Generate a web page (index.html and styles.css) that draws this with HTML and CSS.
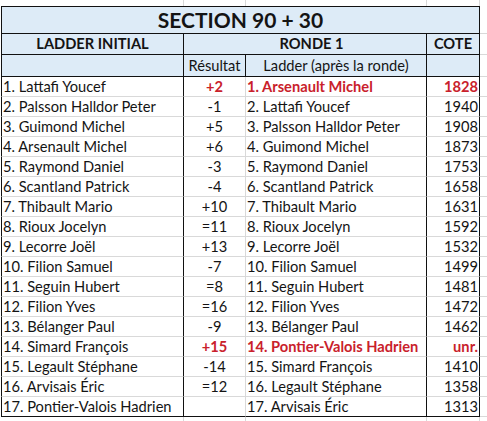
FILE: index.html
```html
<!DOCTYPE html>
<html lang="fr">
<head>
<meta charset="utf-8">
<title>Section 90 + 30</title>
<link rel="stylesheet" href="styles.css">
</head>
<body>
<table class="sheet">
  <colgroup>
    <col class="c-a"><col class="c-b"><col class="c-c"><col class="c-d"><col class="c-e">
  </colgroup>
  <tr class="pad-top"><td></td><td></td><td></td><td></td><td class="e"></td></tr>
  <tr class="title-row">
    <td colspan="4" class="title first">SECTION 90 + 30</td><td class="e"></td>
  </tr>
  <tr class="head-row">
    <td class="first hd">LADDER INITIAL</td>
    <td colspan="2" class="hd ronde">RONDE 1</td>
    <td class="hd">COTE</td>
    <td class="e"></td>
  </tr>
  <tr class="sub-row">
    <td class="first sub"></td>
    <td class="sub ctr">Résultat</td>
    <td class="sub ctr">Ladder (après la ronde)</td>
    <td class="sub"></td>
    <td class="e"></td>
  </tr>
  <tr><td class="first name">1. Lattafi Youcef</td><td class="res red">+2</td><td class="name2 red">1. Arsenault Michel</td><td class="cote red">1828</td><td class="e"></td></tr>
  <tr><td class="first name">2. Palsson Halldor Peter</td><td class="res">-1</td><td class="name2">2. Lattafi Youcef</td><td class="cote">1940</td><td class="e"></td></tr>
  <tr><td class="first name">3. Guimond Michel</td><td class="res">+5</td><td class="name2">3. Palsson Halldor Peter</td><td class="cote">1908</td><td class="e"></td></tr>
  <tr><td class="first name">4. Arsenault Michel</td><td class="res">+6</td><td class="name2">4. Guimond Michel</td><td class="cote">1873</td><td class="e"></td></tr>
  <tr><td class="first name">5. Raymond Daniel</td><td class="res">-3</td><td class="name2">5. Raymond Daniel</td><td class="cote">1753</td><td class="e"></td></tr>
  <tr><td class="first name">6. Scantland Patrick</td><td class="res">-4</td><td class="name2">6. Scantland Patrick</td><td class="cote">1658</td><td class="e"></td></tr>
  <tr><td class="first name">7. Thibault Mario</td><td class="res">+10</td><td class="name2">7. Thibault Mario</td><td class="cote">1631</td><td class="e"></td></tr>
  <tr><td class="first name">8. Rioux Jocelyn</td><td class="res">=11</td><td class="name2">8. Rioux Jocelyn</td><td class="cote">1592</td><td class="e"></td></tr>
  <tr><td class="first name">9. Lecorre Joël</td><td class="res">+13</td><td class="name2">9. Lecorre Joël</td><td class="cote">1532</td><td class="e"></td></tr>
  <tr><td class="first name">10. Filion Samuel</td><td class="res">-7</td><td class="name2">10. Filion Samuel</td><td class="cote">1499</td><td class="e"></td></tr>
  <tr><td class="first name">11. Seguin Hubert</td><td class="res">=8</td><td class="name2">11. Seguin Hubert</td><td class="cote">1481</td><td class="e"></td></tr>
  <tr><td class="first name">12. Filion Yves</td><td class="res">=16</td><td class="name2">12. Filion Yves</td><td class="cote">1472</td><td class="e"></td></tr>
  <tr><td class="first name">13. Bélanger Paul</td><td class="res">-9</td><td class="name2">13. Bélanger Paul</td><td class="cote">1462</td><td class="e"></td></tr>
  <tr><td class="first name">14. Simard François</td><td class="res red">+15</td><td class="name2 red">14. Pontier-Valois Hadrien</td><td class="cote red">unr.</td><td class="e"></td></tr>
  <tr><td class="first name">15. Legault Stéphane</td><td class="res">-14</td><td class="name2">15. Simard François</td><td class="cote">1410</td><td class="e"></td></tr>
  <tr><td class="first name">16. Arvisais Éric</td><td class="res">=12</td><td class="name2">16. Legault Stéphane</td><td class="cote">1358</td><td class="e"></td></tr>
  <tr class="last"><td class="first name">17. Pontier-Valois Hadrien</td><td class="res"></td><td class="name2">17. Arvisais Éric</td><td class="cote">1313</td><td class="e"></td></tr>
  <tr class="pad-bot"><td></td><td></td><td></td><td></td><td class="e"></td></tr>
</table>
</body>
</html>
```

FILE: styles.css
```css
html, body {
  margin: 0;
  padding: 0;
  background: #ffffff;
}
body {
  font-family: Lato, "Open Sans", "Liberation Sans", sans-serif;
  font-size: 14.67px;
  color: #141414;
  overflow: hidden;
}
.sheet {
  border-collapse: separate;
  border-spacing: 0;
  table-layout: fixed;
  margin-left: 1px;
  width: 486px;
}
.c-a { width: 183px; }
.c-b { width: 62px; }
.c-c { width: 181px; }
.c-d { width: 53px; }
.c-e { width: 7px; }

.sheet td {
  padding: 0;
  border-right: 1px solid #d9d9d9;
  border-bottom: 1px solid #d9d9d9;
  height: 19px;
  line-height: 19px;
  white-space: nowrap;
  overflow: hidden;
  vertical-align: bottom;
}
.sheet td.first { border-left: 1px solid #111; }

.pad-top td { height: 6px; line-height: 6px; border-bottom: 0; }
.pad-bot td { height: 5px; line-height: 5px; border-bottom: 0; }
.sheet td.e { border-right: 0; }

.title-row td.title {
  height: 26px;
  line-height: 26px;
  background: #ddebf7;
  border-top: 1px solid #111;
  border-right: 1px solid #111;
  border-bottom: 1px solid #111;
  text-align: center;
  font-weight: 700;
  font-size: 21px;
  vertical-align: bottom;
}
.title-row td.e { height: 26px; }

.head-row td {
  height: 20px;
  line-height: 20px;
}
.hd {
  background: #ddebf7;
  text-align: center;
  font-weight: 700;
  border-right-color: #111 !important;
  border-bottom-color: #111 !important;
}
.ronde { padding-left: 13px !important; }
.sub-row td { height: 21px; line-height: 21px; }
.sub {
  background: #ddebf7;
  border-right-color: #111 !important;
  border-bottom-color: #111 !important;
}
.ctr { text-align: center; }

.name { padding-left: 1px !important; border-right-color: #111 !important; }
.name2 { padding-left: 1px !important; border-right-color: #111 !important; }
.res { text-align: center; }
.cote { text-align: right; padding-right: 1px !important; border-right-color: #111 !important; }

.last td.first, .last td.res, .last td.name2, .last td.cote {
  border-bottom-color: #111;
}

.red { color: #c9212b; font-weight: 700; }
```
